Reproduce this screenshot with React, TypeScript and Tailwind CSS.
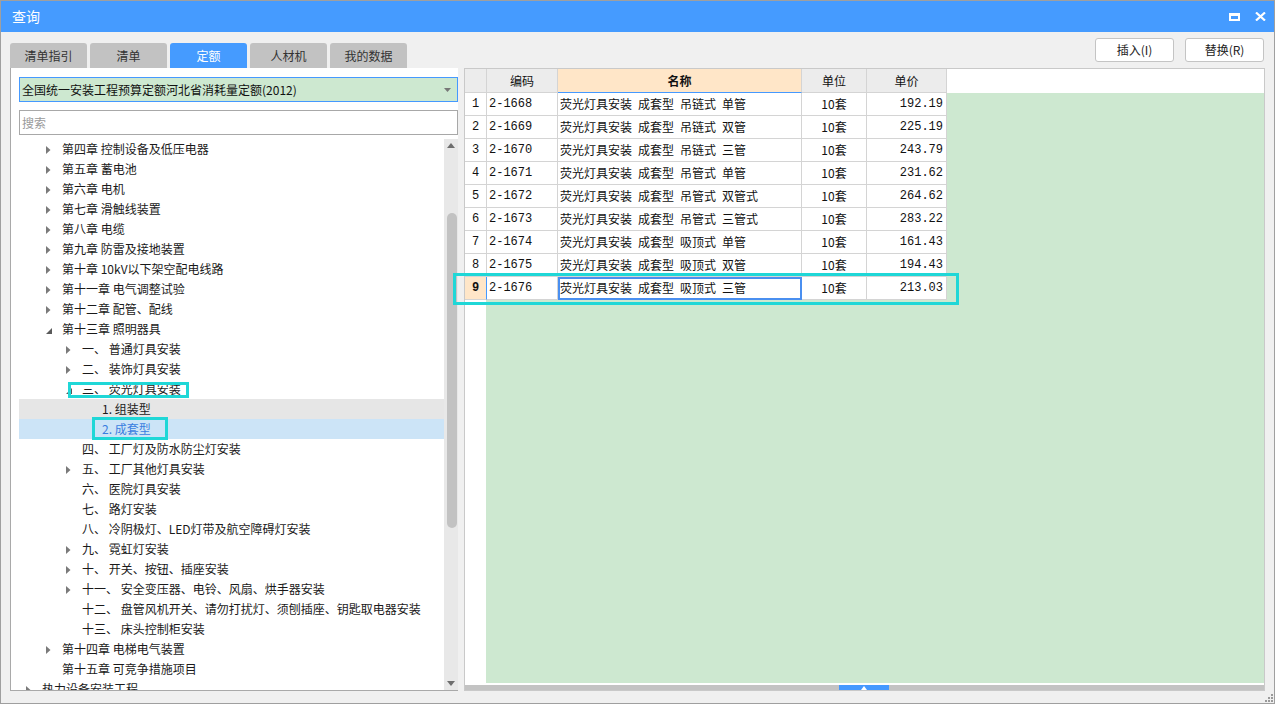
import React from 'react';

type TreeItem = {
  level: 0 | 1 | 2 | 3;
  label: string;
  arrow?: 'closed' | 'open';
  state?: 'hover' | 'selected';
};

const tree: TreeItem[] = [
  { level: 1, label: '第四章 控制设备及低压电器', arrow: 'closed' },
  { level: 1, label: '第五章 蓄电池', arrow: 'closed' },
  { level: 1, label: '第六章 电机', arrow: 'closed' },
  { level: 1, label: '第七章 滑触线装置', arrow: 'closed' },
  { level: 1, label: '第八章 电缆', arrow: 'closed' },
  { level: 1, label: '第九章 防雷及接地装置', arrow: 'closed' },
  { level: 1, label: '第十章 10kV以下架空配电线路', arrow: 'closed' },
  { level: 1, label: '第十一章 电气调整试验', arrow: 'closed' },
  { level: 1, label: '第十二章 配管、配线', arrow: 'closed' },
  { level: 1, label: '第十三章 照明器具', arrow: 'open' },
  { level: 2, label: '一、 普通灯具安装', arrow: 'closed' },
  { level: 2, label: '二、 装饰灯具安装', arrow: 'closed' },
  { level: 2, label: '三、 荧光灯具安装', arrow: 'open' },
  { level: 3, label: '1. 组装型', state: 'hover' },
  { level: 3, label: '2. 成套型', state: 'selected' },
  { level: 2, label: '四、 工厂灯及防水防尘灯安装' },
  { level: 2, label: '五、 工厂其他灯具安装', arrow: 'closed' },
  { level: 2, label: '六、 医院灯具安装' },
  { level: 2, label: '七、 路灯安装' },
  { level: 2, label: '八、 冷阴极灯、LED灯带及航空障碍灯安装' },
  { level: 2, label: '九、 霓虹灯安装', arrow: 'closed' },
  { level: 2, label: '十、 开关、按钮、插座安装', arrow: 'closed' },
  { level: 2, label: '十一、 安全变压器、电铃、风扇、烘手器安装', arrow: 'closed' },
  { level: 2, label: '十二、 盘管风机开关、请勿打扰灯、须刨插座、钥匙取电器安装' },
  { level: 2, label: '十三、 床头控制柜安装' },
  { level: 1, label: '第十四章 电梯电气装置', arrow: 'closed' },
  { level: 1, label: '第十五章 可竞争措施项目' },
  { level: 0, label: '热力设备安装工程', arrow: 'closed' },
];

const indent = ['pl-[7px]', 'pl-[27px]', 'pl-[47px]', 'pl-[67px]'];

const EN_SPACE = '\u2002';

const rows: [string, string[], string][] = [
  ['2-1668', ['荧光灯具安装', '成套型', '吊链式', '单管'], '192.19'],
  ['2-1669', ['荧光灯具安装', '成套型', '吊链式', '双管'], '225.19'],
  ['2-1670', ['荧光灯具安装', '成套型', '吊链式', '三管'], '243.79'],
  ['2-1671', ['荧光灯具安装', '成套型', '吊管式', '单管'], '231.62'],
  ['2-1672', ['荧光灯具安装', '成套型', '吊管式', '双管式'], '264.62'],
  ['2-1673', ['荧光灯具安装', '成套型', '吊管式', '三管式'], '283.22'],
  ['2-1674', ['荧光灯具安装', '成套型', '吸顶式', '单管'], '161.43'],
  ['2-1675', ['荧光灯具安装', '成套型', '吸顶式', '双管'], '194.43'],
  ['2-1676', ['荧光灯具安装', '成套型', '吸顶式', '三管'], '213.03'],
];

const tabs = ['清单指引', '清单', '定额', '人材机', '我的数据'];

function Arrow({ kind }: { kind?: 'closed' | 'open' }) {
  if (kind === 'closed') {
    return (
      <svg width="5" height="8" viewBox="0 0 5 8" className="mt-[1px]">
        <polygon points="0,0 4.5,4 0,8" fill="#7a7a7a" />
      </svg>
    );
  }
  if (kind === 'open') {
    return (
      <svg width="6" height="6" viewBox="0 0 6 6" className="mt-[4px]">
        <polygon points="6,0 6,6 0,6" fill="#5a5a5a" />
      </svg>
    );
  }
  return null;
}

function TreeRow({ item }: { item: TreeItem }) {
  const bg =
    item.state === 'selected' ? 'bg-[#cce4f7] text-[#3a7ee0]' : item.state === 'hover' ? 'bg-[#e6e6e6] text-[#1a1a1a]' : 'text-[#1a1a1a]';
  return (
    <div className={`h-[20px] shrink-0 flex items-center whitespace-nowrap ${indent[item.level]} ${bg}`}>
      <div className="w-[16px] shrink-0 flex items-center">
        <Arrow kind={item.arrow} />
      </div>
      <span className="text-[12px] leading-[20px]">{item.label}</span>
    </div>
  );
}

function VScrollbar() {
  return (
    <div className="w-[14px] shrink-0 bg-[#e8e8e8] flex flex-col items-center">
      <svg width="8" height="5" viewBox="0 0 8 5" className="mt-[4px]">
        <polygon points="4,0 8,5 0,5" fill="#6e6e6e" />
      </svg>
      <div className="mt-[65px] ml-[1px] w-[10px] h-[315px] rounded-full bg-[#c2c2c2]" />
      <div className="flex-1" />
      <svg width="8" height="5" viewBox="0 0 8 5" className="mb-[4px]">
        <polygon points="0,0 8,0 4,5" fill="#6e6e6e" />
      </svg>
    </div>
  );
}

function LeftPanel() {
  return (
    <div className="w-[448px] h-[623px] shrink-0 bg-white border-l border-b border-[#a9a9a9] pl-[8px] pt-[9px] flex flex-col">
      <div className="h-[25px] shrink-0 bg-[#cde8d0] border border-[#4599ff] flex items-center justify-between pl-[2px] pr-[6px]">
        <span className="text-[12px] text-[#111]">全国统一安装工程预算定额河北省消耗量定额(2012)</span>
        <svg width="7" height="4" viewBox="0 0 7 4">
          <polygon points="0,0 7,0 3.5,4" fill="#777" />
        </svg>
      </div>
      <div className="h-[25px] shrink-0 mt-[8px] border border-[#a8a8a8] flex items-center pl-[2px]">
        <span className="text-[12px] text-[#9a9a9a]">搜索</span>
      </div>
      <div className="mt-[4px] flex-1 flex min-h-0">
        <div className="flex-1 flex flex-col overflow-hidden">
          {tree.map((item, i) => (
            <TreeRow key={i} item={item} />
          ))}
        </div>
        <VScrollbar />
      </div>
    </div>
  );
}

const cellBase = 'h-full shrink-0 border-r border-b border-[#d4d4d4] flex items-center text-[12px] text-[#111]';
const mono = "font-['Liberation_Mono',monospace] text-[11px]";

function Grid() {
  return (
    <div className="flex flex-col shrink-0">
      <div className="h-[24px] flex">
        <div className={`${cellBase} w-[22px] bg-[#ececec]`} />
        <div className={`${cellBase} w-[71px] bg-[#ececec] justify-center`}>编码</div>
        <div className={`${cellBase} w-[244px] bg-[#ffe6c8] justify-center font-bold border-b-[#4599ff]`}>名称</div>
        <div className={`${cellBase} w-[65px] bg-[#ececec] justify-center`}>单位</div>
        <div className={`${cellBase} w-[80px] bg-[#ececec] justify-center`}>单价</div>
        <div className="flex-1 bg-white" />
      </div>
      {rows.map((r, i) => {
        const active = i === rows.length - 1;
        return (
          <div key={r[0]} className="h-[23px] flex">
            <div
              className={`${cellBase} w-[22px] justify-center ${mono} ${
                active ? 'bg-[#ffe6c8] font-bold border-r-[#4599ff]' : 'bg-white'
              }`}
            >
              {i + 1}
            </div>
            <div className={`${cellBase} w-[71px] bg-white pl-[2px] ${mono}`}>{r[0]}</div>
            <div
              className={`${cellBase} w-[244px] bg-white pl-[2px] whitespace-pre ${
                active ? 'outline-2 outline-[#4a8ff0] -outline-offset-2' : ''
              }`}
            >
              {r[1].join(EN_SPACE)}
            </div>
            <div className={`${cellBase} w-[65px] bg-white justify-center`}>10套</div>
            <div className={`${cellBase} w-[80px] bg-white justify-end pr-[3px] ${mono}`}>{r[2]}</div>
            <div className="flex-1 bg-[#cde8d0]" />
          </div>
        );
      })}
    </div>
  );
}

function RightPanel() {
  return (
    <div className="w-[801px] h-[623px] shrink-0 bg-white border border-[#c9c9c9] flex flex-col">
      <Grid />
      <div className="flex-1 flex min-h-0">
        <div className="w-[21px] shrink-0 bg-white" />
        <div className="flex-1 bg-[#cde8d0]" />
      </div>
      <div className="h-[2px] shrink-0 bg-white" />
      <div className="h-[5px] shrink-0 bg-[#c3c3c3] flex">
        <div className="ml-[374px] w-[50px] h-full bg-[#4599ff] flex items-center justify-center">
          <svg width="6" height="4" viewBox="0 0 6 4">
            <polygon points="3,0 6,4 0,4" fill="#fff" />
          </svg>
        </div>
      </div>
    </div>
  );
}

export default function App() {
  return (
    <div className="relative w-[1275px] h-[704px] bg-[#f0f0f0] border border-[#9f9f9f] flex flex-col overflow-hidden font-['Microsoft_YaHei','Noto_Sans_CJK_SC',sans-serif]">
      {/* title bar */}
      <div className="h-[31px] shrink-0 bg-[#459bff] flex items-center justify-between pl-[11px] pr-[8px]">
        <span className="text-[14px] text-white">查询</span>
        <div className="flex items-center gap-[15px]">
          <div className="w-[11px] h-[8px] border-2 border-t-[3px] border-white" />
          <svg width="11" height="9" viewBox="0 0 11 9">
            <path d="M1 0.5 L10 8.5 M10 0.5 L1 8.5" stroke="#fff" strokeWidth="2.2" />
          </svg>
        </div>
      </div>

      {/* tabs + actions */}
      <div className="h-[36px] shrink-0 flex justify-between px-[9px]">
        <div className="flex items-end gap-[3px]">
          {tabs.map((t) => (
            <div
              key={t}
              className={`w-[77px] h-[25px] rounded-t-[3px] flex items-center justify-center text-[12px] ${
                t === '定额' ? 'bg-[#459bff] text-white' : 'bg-[#c2c2c2] text-[#333]'
              }`}
            >
              {t}
            </div>
          ))}
        </div>
        <div className="flex gap-[11px] mt-[6px] mr-[1px] self-start">
          {['插入(I)', '替换(R)'].map((b) => (
            <div
              key={b}
              className="w-[79px] h-[24px] bg-white border border-[#c4c4c4] rounded-[3px] flex items-center justify-center text-[12px] text-[#222]"
            >
              {b}
            </div>
          ))}
        </div>
      </div>

      {/* panels */}
      <div className="flex px-[9px] gap-[6px]">
        <LeftPanel />
        <RightPanel />
      </div>

      <div className="flex-1 flex justify-end items-end pr-[1px] pb-[1px]">
        <svg width="9" height="9" viewBox="0 0 9 9">
          <rect x="7" y="1" width="2" height="2" fill="#9a9a9a" />
          <rect x="4" y="4" width="2" height="2" fill="#9a9a9a" />
          <rect x="7" y="4" width="2" height="2" fill="#9a9a9a" />
          <rect x="1" y="7" width="2" height="2" fill="#9a9a9a" />
          <rect x="4" y="7" width="2" height="2" fill="#9a9a9a" />
          <rect x="7" y="7" width="2" height="2" fill="#9a9a9a" />
        </svg>
      </div>

      {/* annotation boxes */}
      <div className="absolute left-[67px] top-[381px] w-[121px] h-[16px] border-[3px] border-[#1fd7d7]" />
      <div className="absolute left-[91px] top-[416px] w-[76px] h-[23px] border-[3px] border-[#1fd7d7]" />
      <div className="absolute left-[452px] top-[272px] w-[506px] h-[32px] border-[3px] border-[#1fd7d7]" />
    </div>
  );
}
